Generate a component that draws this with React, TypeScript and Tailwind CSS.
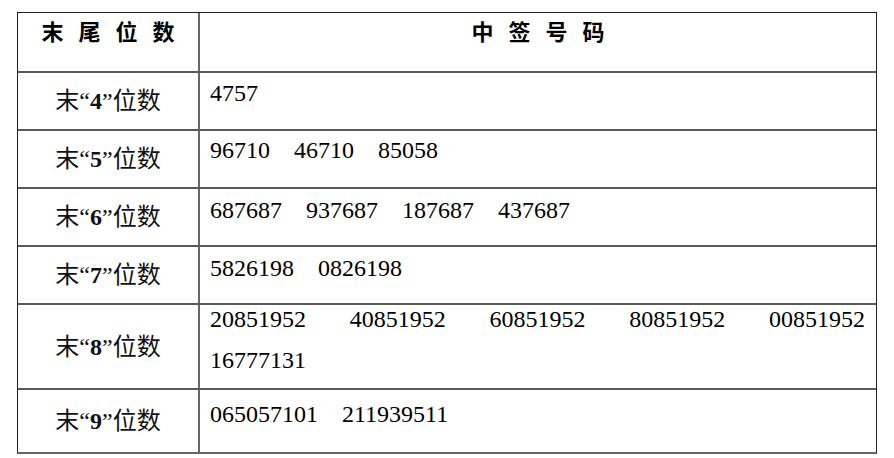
const rows: { digit: string; lines: string[][]; pt: string; h: string; justify?: boolean }[] = [
  { digit: "4", lines: [["4757"]], pt: "pt-[8px]", h: "h-[58px]" },
  { digit: "5", lines: [["96710", "46710", "85058"]], pt: "pt-[7px]", h: "h-[58px]" },
  { digit: "6", lines: [["687687", "937687", "187687", "437687"]], pt: "pt-[9px]", h: "h-[58px]" },
  { digit: "7", lines: [["5826198", "0826198"]], pt: "pt-[9px]", h: "h-[58px]" },
  {
    digit: "8",
    lines: [["20851952", "40851952", "60851952", "80851952", "00851952"], ["16777131"]],
    pt: "pt-[2px]",
    h: "h-[85px]",
    justify: true,
  },
  { digit: "9", lines: [["065057101", "211939511"]], pt: "pt-[12px]", h: "h-[64px]" },
];

const serif = "font-['Liberation_Serif','Noto_Sans_CJK_SC',serif]";
const sans = "font-['Noto_Sans_CJK_SC','Liberation_Sans',sans-serif]";

function HeaderText({ chars }: { chars: string[] }) {
  return (
    <div className={`flex justify-center gap-[15px] text-[22px] leading-[24px] font-bold text-black ${sans}`}>
      {chars.map((c) => (
        <span key={c}>{c}</span>
      ))}
    </div>
  );
}

export default function App() {
  return (
    <div className="min-h-[458px] w-[894px] bg-white pl-[17px] pt-[12px]">
      <div className="w-[860px] border border-[#222] border-b-2 border-b-[#666]">
        <div className="flex h-[58px]">
          <div className="w-[182px] shrink-0 border-r-2 border-[#666] pt-[5px]">
            <HeaderText chars={["末", "尾", "位", "数"]} />
          </div>
          <div className="flex-1 pt-[5px]">
            <HeaderText chars={["中", "签", "号", "码"]} />
          </div>
        </div>

        {rows.map((row) => (
          <div key={row.digit} className={`flex border-t-2 border-[#5a5a5a] ${row.h}`}>
            <div
              className={`flex w-[182px] shrink-0 items-center justify-center border-r-2 border-[#666] text-[24px] leading-[28px] text-[#111] ${serif}`}
            >
              <span>
                末“<b className="font-bold">{row.digit}</b>”位数
              </span>
            </div>
            <div className={`flex flex-1 flex-col gap-[17px] pl-[10px] pr-[11px] ${row.pt} text-[24px] leading-[24px] text-black ${serif}`}>
              {row.lines.map((line, i) => (
                <div
                  key={i}
                  className={`flex ${row.justify && line.length > 1 ? "justify-between" : "gap-[24px]"}`}
                >
                  {line.map((n) => (
                    <span key={n}>{n}</span>
                  ))}
                </div>
              ))}
            </div>
          </div>
        ))}
      </div>
    </div>
  );
}
